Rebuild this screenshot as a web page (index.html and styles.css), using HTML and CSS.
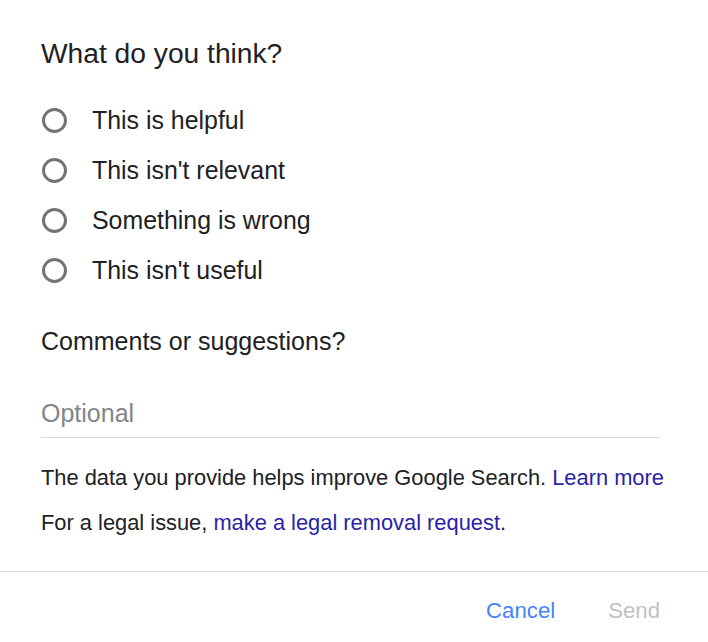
FILE: index.html
```html
<!DOCTYPE html>
<html>
<head>
<meta charset="utf-8">
<link rel="stylesheet" href="styles.css">
</head>
<body>
<div class="dialog">
  <div class="content">
    <h1 class="title">What do you think?</h1>
    <div class="options">
      <label class="option"><span class="radio"></span><span class="opt-text">This is helpful</span></label>
      <label class="option"><span class="radio"></span><span class="opt-text">This isn't relevant</span></label>
      <label class="option"><span class="radio"></span><span class="opt-text">Something is wrong</span></label>
      <label class="option"><span class="radio"></span><span class="opt-text">This isn't useful</span></label>
    </div>
    <h2 class="subtitle">Comments or suggestions?</h2>
    <div class="field"><span class="placeholder">Optional</span></div>
    <p class="note">The data you provide helps improve Google Search. <a class="link">Learn more</a></p>
    <p class="note legal">For a legal issue, <a class="link">make a legal removal request</a>.</p>
  </div>
  <div class="footer">
    <span class="btn cancel">Cancel</span>
    <span class="btn send">Send</span>
  </div>
</div>
</body>
</html>
```
FILE: styles.css
```css
html, body {
  margin: 0;
  padding: 0;
  background: #fff;
}
body {
  font-family: "Liberation Sans", Arial, sans-serif;
  color: #202124;
}
.dialog {
  width: 708px;
}
.content {
  padding: 36px 20px 0 41px;
}
.title {
  margin: 0;
  font-size: 28.2px;
  font-weight: normal;
  line-height: 34px;
}
.options {
  margin-top: 25px;
  display: flex;
  flex-direction: column;
}
.option {
  display: flex;
  align-items: center;
  height: 50px;
}
.radio {
  box-sizing: border-box;
  width: 25px;
  height: 25px;
  border: 3px solid #737373;
  border-radius: 50%;
  margin-left: 1px;
  margin-right: 25px;
}
.opt-text {
  font-size: 24.9px;
}
.subtitle {
  margin: 26px 0 0;
  font-size: 25px;
  font-weight: normal;
  line-height: 40px;
}
.field {
  margin-top: 32px;
  width: 619px;
  border-bottom: 1px solid #dadce0;
  height: 45px;
  box-sizing: border-box;
}
.placeholder {
  font-size: 25px;
  color: #80868b;
  line-height: 40px;
}
.note {
  margin: 26px 0 0;
  font-size: 21.85px;
  line-height: 28px;
  white-space: nowrap;
}
.legal {
  margin-top: 17px;
}
.link {
  color: #2a1fa8;
}
.footer {
  margin-top: 34px;
  border-top: 1px solid #dadce0;
  height: 78px;
  display: flex;
  justify-content: flex-end;
  align-items: center;
  padding-right: 48px;
  gap: 53px;
}
.btn {
  font-size: 22.2px;
}
.cancel {
  color: #4285f4;
}
.send {
  color: #bdc1c6;
}
```
